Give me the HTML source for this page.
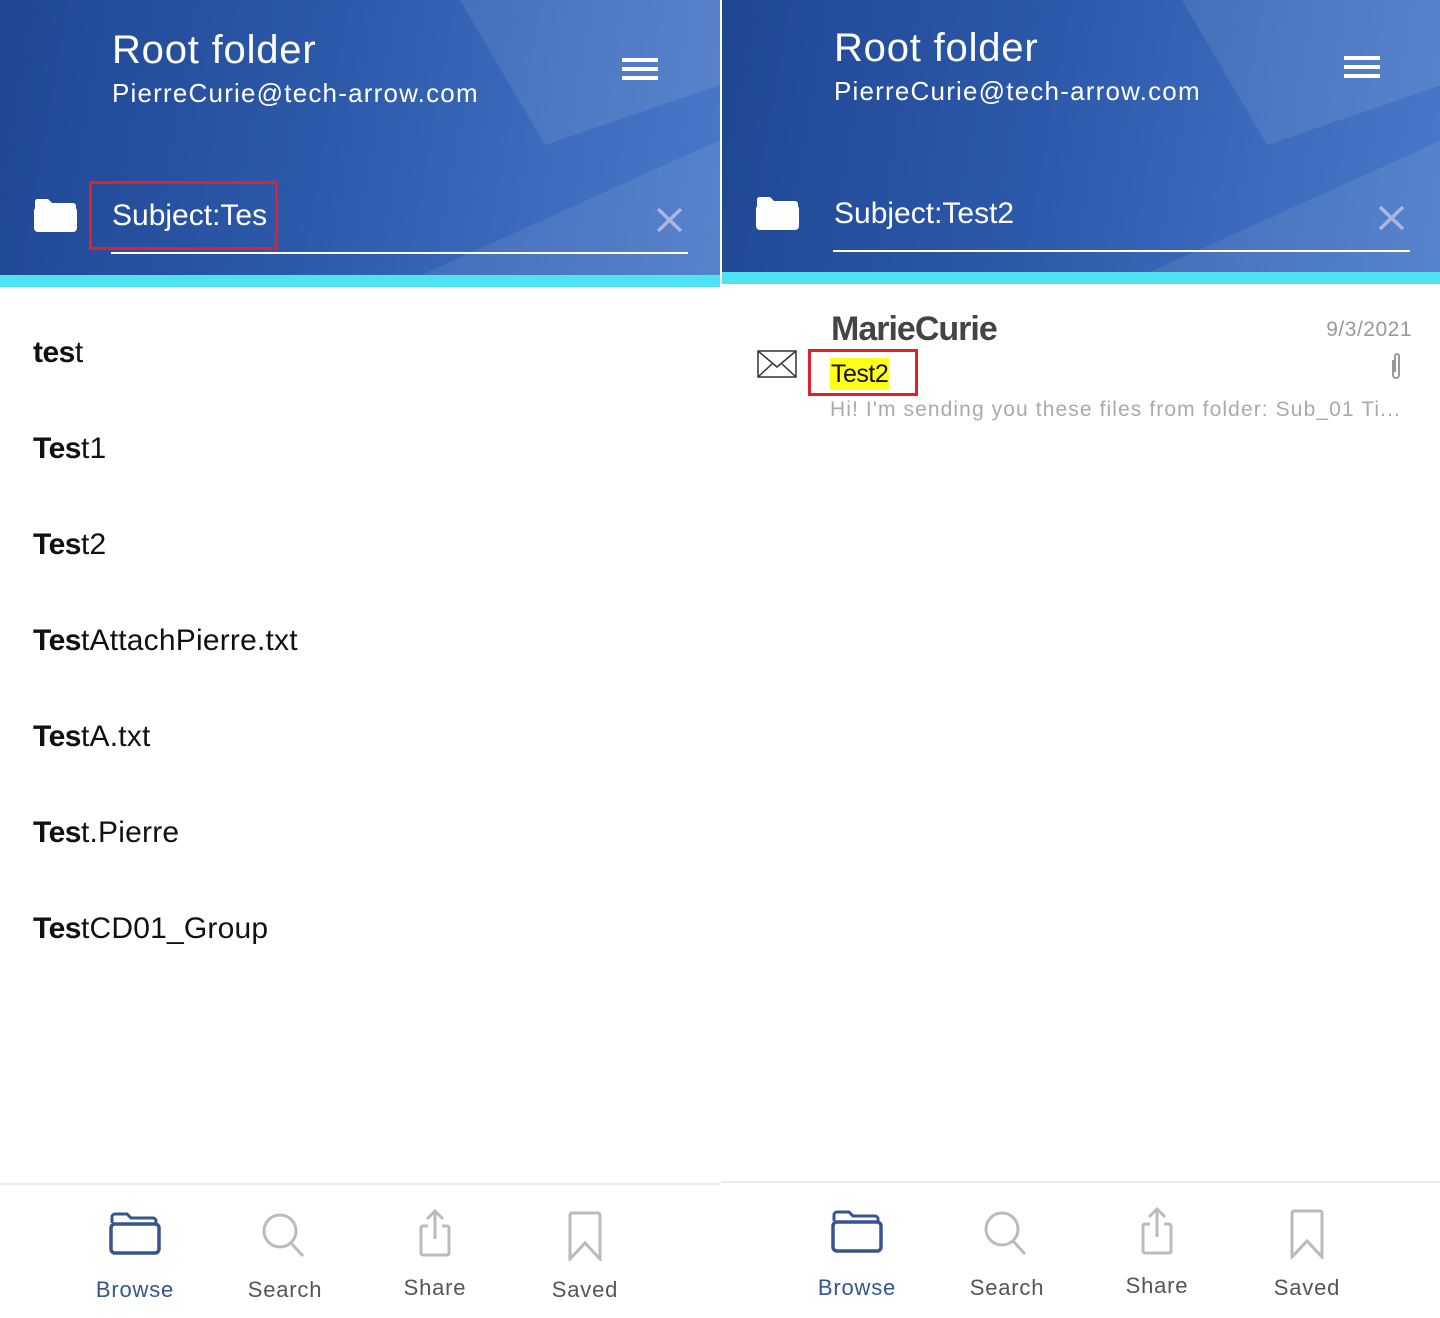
<!DOCTYPE html>
<html><head><meta charset="utf-8"><style>
*{margin:0;padding:0;box-sizing:border-box}
body{width:1440px;height:1318px;background:#fff;font-family:"Liberation Sans",sans-serif;position:relative;overflow:hidden}
.p{position:absolute;top:0;width:720px;height:1318px;background:#fff;overflow:hidden}
.hd{position:absolute;left:0;top:0;width:720px;background:linear-gradient(100deg,#1f4793 0%,#2d59aa 45%,#3d6bbd 75%,#4a79c9 100%);overflow:hidden}
.poly1{position:absolute;left:0;top:0;width:720px;height:280px;background:rgba(255,255,255,.09);clip-path:polygon(460px 0,720px 0,720px 85px,545px 145px)}
.poly2{position:absolute;left:0;top:0;width:720px;height:280px;background:rgba(255,255,255,.08);clip-path:polygon(410px 280px,720px 140px,720px 280px)}
.cy{position:absolute;left:0;width:720px;height:12px;background:#4de3f0}
.t1{position:absolute;left:112px;color:#fff;font-size:40px;white-space:nowrap;letter-spacing:.8px}
.t2{position:absolute;left:112px;color:#fff;font-size:26px;white-space:nowrap;letter-spacing:1.2px}
.hb{position:absolute;left:622px;width:36px;height:22px;border-top:4px solid #fff;border-bottom:4px solid #fff}
.hb:after{content:"";position:absolute;left:0;right:0;top:5px;height:4px;background:#fff}
.fd{position:absolute;left:33px}
.st{position:absolute;left:112px;color:#fff;font-size:30px;white-space:nowrap}
.ul{position:absolute;left:111px;width:577px;height:2px;background:#fff}
.x{position:absolute;left:656px}
.red{position:absolute;border:3px solid #e3202a}
.li{position:absolute;left:33px;font-size:30px;color:#111;white-space:nowrap;letter-spacing:.2px}
.li b{font-weight:bold;letter-spacing:-.5px}
.nav{position:absolute;left:0;width:720px;border-top:2px solid #ececec;height:140px}
.ni{position:absolute;width:150px;text-align:center}
.ni svg{display:block;margin:0 auto}
.ni span{display:block;font-size:22px;color:#555;letter-spacing:.8px;margin-top:20px}
.ni.on span{color:#34558f}
</style></head><body>

<!-- LEFT -->
<div class="p" style="left:0">
 <div class="hd" style="height:275px"><div class="poly1"></div><div class="poly2"></div></div>
 <div class="cy" style="top:275px"></div>
 <div class="t1" style="top:28px">Root folder</div>
 <div class="t2" style="top:78px">PierreCurie@tech-arrow.com</div>
 <div class="hb" style="top:58px"></div>
 <svg class="fd" style="top:197px" width="45" height="36" viewBox="0 0 45 36"><path d="M4 2h11l4 4h21a3 3 0 0 1 3 3v2H2V5a3 3 0 0 1 2-3z" fill="#fff"/><rect x="1" y="10" width="43" height="25" rx="4" fill="#fff"/></svg>
 <div class="st" style="top:199px">Subject:Tes</div>
 <div class="ul" style="top:252px"></div>
 <svg class="x" style="top:207px" width="27" height="26"><path d="M2 2L25 24M25 2L2 24" stroke="#aab8e0" stroke-width="3.5"/></svg>
 <div class="red" style="left:89px;top:181px;width:189px;height:69px"></div>
 <div class="li" style="top:336px"><b>tes</b>t</div>
 <div class="li" style="top:432px"><b>Tes</b>t1</div>
 <div class="li" style="top:528px"><b>Tes</b>t2</div>
 <div class="li" style="top:624px"><b>Tes</b>tAttachPierre.txt</div>
 <div class="li" style="top:720px"><b>Tes</b>tA.txt</div>
 <div class="li" style="top:816px"><b>Tes</b>t.Pierre</div>
 <div class="li" style="top:912px"><b>Tes</b>tCD01_Group</div>
 <div class="nav" style="top:1183px">
  <div class="ni on" style="left:60px;top:26px"><svg width="54" height="46" viewBox="0 0 54 46"><path d="M4 12V6a3 3 0 0 1 3-3h12l4 4h22a3 3 0 0 1 3 3v4" fill="none" stroke="#34558f" stroke-width="3"/><rect x="3" y="13" width="48" height="29" rx="4" fill="none" stroke="#34558f" stroke-width="3.5"/></svg><span>Browse</span></div>
  <div class="ni" style="left:210px;top:26px"><svg width="54" height="46" viewBox="0 0 54 46"><circle cx="22" cy="20" r="16" fill="none" stroke="#bbb" stroke-width="3"/><path d="M33 32L45 45" stroke="#bbb" stroke-width="3"/></svg><span>Search</span></div>
  <div class="ni" style="left:360px;top:24px"><svg width="54" height="48" viewBox="0 0 54 48"><path d="M20 17h-5a2 2 0 0 0-2 2v25a2 2 0 0 0 2 2h24a2 2 0 0 0 2-2V19a2 2 0 0 0-2-2h-5" fill="none" stroke="#bbb" stroke-width="3"/><path d="M27 30V2M19 10l8-8 8 8" fill="none" stroke="#bbb" stroke-width="3"/></svg><span style="margin-top:18px">Share</span></div>
  <div class="ni" style="left:510px;top:26px"><svg width="54" height="50" viewBox="0 0 54 50"><path d="M12 48V4a2 2 0 0 1 2-2h26a2 2 0 0 1 2 2v44L27 32z" fill="none" stroke="#bbb" stroke-width="3"/></svg><span style="margin-top:16px">Saved</span></div>
 </div>
</div>

<!-- RIGHT -->
<div class="p" style="left:722px;width:718px">
 <div class="hd" style="height:272px"><div class="poly1"></div><div class="poly2"></div></div>
 <div class="cy" style="top:272px"></div>
 <div class="t1" style="top:26px">Root folder</div>
 <div class="t2" style="top:76px">PierreCurie@tech-arrow.com</div>
 <div class="hb" style="top:56px"></div>
 <svg class="fd" style="top:195px" width="45" height="36" viewBox="0 0 45 36"><path d="M4 2h11l4 4h21a3 3 0 0 1 3 3v2H2V5a3 3 0 0 1 2-3z" fill="#fff"/><rect x="1" y="10" width="43" height="25" rx="4" fill="#fff"/></svg>
 <div class="st" style="top:197px">Subject:Test2</div>
 <div class="ul" style="top:250px"></div>
 <svg class="x" style="top:205px" width="27" height="26"><path d="M2 2L25 24M25 2L2 24" stroke="#aab8e0" stroke-width="3.5"/></svg>
 <div style="position:absolute;left:109px;top:310px;font-size:34px;font-weight:bold;color:#444;letter-spacing:-1px">MarieCurie</div>
 <div style="position:absolute;right:28px;top:318px;font-size:21px;color:#999;letter-spacing:.5px">9/3/2021</div>
 <svg style="position:absolute;left:35px;top:350px" width="40" height="28" viewBox="0 0 40 28"><rect x="1" y="1" width="38" height="26" fill="none" stroke="#333" stroke-width="1.5"/><path d="M1 1l19 16L39 1M1 27l14-13M39 27L25 14" fill="none" stroke="#333" stroke-width="1.5"/></svg>
 <div style="position:absolute;left:108px;top:358px;height:32px;padding:0 1px;background:#ffff1a;font-size:25px;line-height:32px;color:#111;letter-spacing:-.5px">Test2</div>
 <div class="red" style="left:86px;top:349px;width:110px;height:47px"></div>
 <svg style="position:absolute;left:668px;top:352px" width="12" height="29" viewBox="0 0 12 29"><path d="M3 8v15a3 3 0 0 0 6 0V4a2 2 0 0 0-4 0v16" fill="none" stroke="#999" stroke-width="2"/></svg>
 <div style="position:absolute;left:108px;top:398px;font-size:21px;color:#aaa;white-space:nowrap;letter-spacing:1.1px">Hi! I'm sending you these files from folder: Sub_01 Ti...</div>
 <div class="nav" style="top:1181px">
  <div class="ni on" style="left:60px;top:26px"><svg width="54" height="46" viewBox="0 0 54 46"><path d="M4 12V6a3 3 0 0 1 3-3h12l4 4h22a3 3 0 0 1 3 3v4" fill="none" stroke="#34558f" stroke-width="3"/><rect x="3" y="13" width="48" height="29" rx="4" fill="none" stroke="#34558f" stroke-width="3.5"/></svg><span>Browse</span></div>
  <div class="ni" style="left:210px;top:26px"><svg width="54" height="46" viewBox="0 0 54 46"><circle cx="22" cy="20" r="16" fill="none" stroke="#bbb" stroke-width="3"/><path d="M33 32L45 45" stroke="#bbb" stroke-width="3"/></svg><span>Search</span></div>
  <div class="ni" style="left:360px;top:24px"><svg width="54" height="48" viewBox="0 0 54 48"><path d="M20 17h-5a2 2 0 0 0-2 2v25a2 2 0 0 0 2 2h24a2 2 0 0 0 2-2V19a2 2 0 0 0-2-2h-5" fill="none" stroke="#bbb" stroke-width="3"/><path d="M27 30V2M19 10l8-8 8 8" fill="none" stroke="#bbb" stroke-width="3"/></svg><span style="margin-top:18px">Share</span></div>
  <div class="ni" style="left:510px;top:26px"><svg width="54" height="50" viewBox="0 0 54 50"><path d="M12 48V4a2 2 0 0 1 2-2h26a2 2 0 0 1 2 2v44L27 32z" fill="none" stroke="#bbb" stroke-width="3"/></svg><span style="margin-top:16px">Saved</span></div>
 </div>
</div>
</body></html>
